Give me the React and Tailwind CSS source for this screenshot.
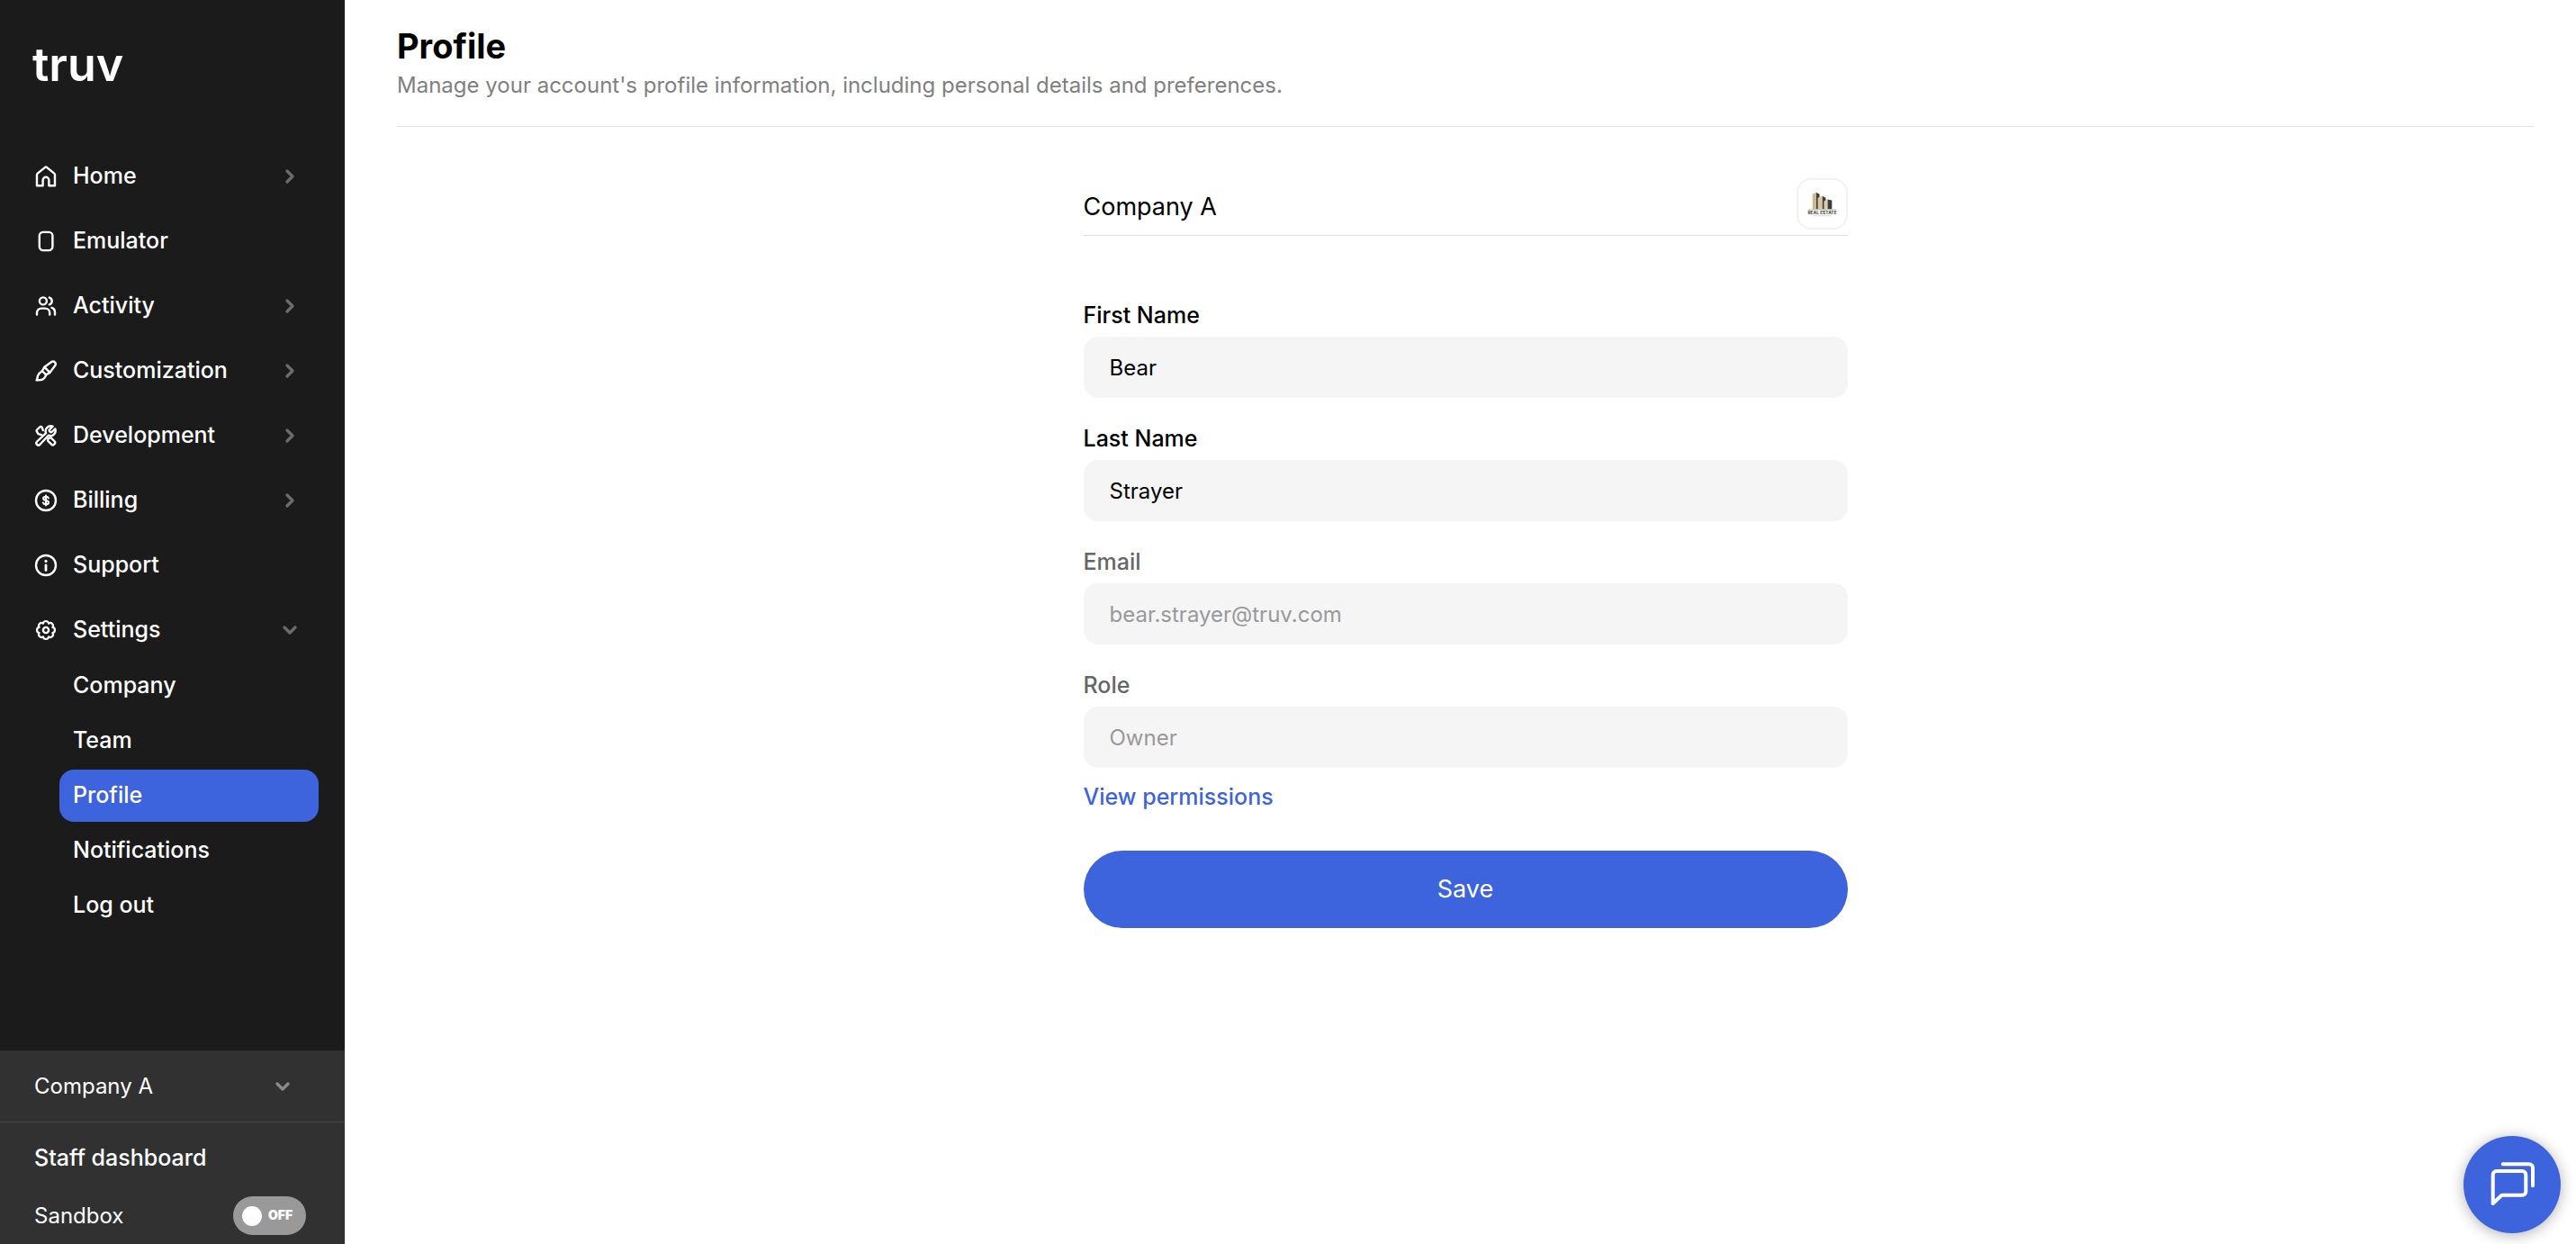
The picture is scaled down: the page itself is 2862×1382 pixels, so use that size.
import React, { useState } from "react";

const Icon = ({ children }) => (
  <svg
    viewBox="0 0 26 26"
    className="w-[26px] h-[26px] shrink-0"
    fill="none"
    stroke="currentColor"
    strokeWidth="2.4"
    strokeLinecap="round"
    strokeLinejoin="round"
    aria-hidden="true"
  >
    {children}
  </svg>
);

const HomeIcon = () => (
  <Icon>
    <path d="M3 23.2V11.3c0-.7.3-1.3.8-1.7l8-6.5c.7-.6 1.7-.6 2.4 0l8 6.5c.5.4.8 1 .8 1.7v11.9h-6.6v-6a3.4 3.4 0 0 0-6.8 0v6Z" />
  </Icon>
);

const DeviceIcon = () => (
  <Icon>
    <rect x="5.8" y="2.9" width="14.6" height="20.2" rx="4" />
  </Icon>
);

const UsersIcon = () => (
  <Icon>
    <circle cx="9.9" cy="7.4" r="4" />
    <path d="M3 22.6v-2.2a4.8 4.8 0 0 1 4.8-4.8h4.6a4.8 4.8 0 0 1 4.8 4.8v2.2" />
    <path d="M16.8 3.6a4 4 0 0 1 0 7.7M19.4 14.8a4.8 4.8 0 0 1 3.6 4.6v3.2" />
  </Icon>
);

const BrushIcon = () => (
  <Icon>
    <path d="m8.800 13.200 2.600-4.400 7.900-5.800a2.900 2.900 0 0 1 4 4l-5.900 7.900-4.200 2.500" />
    <path d="M2.600 23.400c1.200-1.400.7-3.300 1.500-5.300.8-1.900 2.500-3.600 4.700-4.900l4.400 4.200c-.7 2.300-1.800 3.900-3.600 5-2.100 1.200-4.500 1-7 1Z" />
    <path d="m11.400 8.800 6 6.100" />
  </Icon>
);

const ToolsIcon = () => (
  <Icon>
    <path d="m20.600 2.700-3.200 3.100a1.800 1.800 0 0 0 2.600 2.700l3.300-3.100a5.700 5.700 0 0 1-7.500 7.300L6.400 22.800a2.300 2.300 0 0 1-3.300-3.300l10-9.400a5.700 5.700 0 0 1 7.500-7.400Z" />
    <path d="m9.800 7-1.200-3.300a1.400 1.400 0 0 0-2.300-.4l-3.300 3.200a1.400 1.400 0 0 0-.2 1.700l1.700 2.900 3.600 1" />
    <path d="m16.300 15.600 2.200-.4 4.300 4.300c.7.7.7 1.700 0 2.400l-1 1c-.7.7-1.700.7-2.400 0l-4.300-4.300.3-2.200" />
  </Icon>
);

const DollarIcon = () => (
  <Icon>
    <circle cx="13" cy="13" r="11" />
    <path d="M15.9 10.3c-.4-1.100-1.500-1.600-2.900-1.600-1.700 0-2.900.8-2.900 2.100 0 3.100 5.900 1.400 5.900 4.400 0 1.300-1.200 2.100-3 2.100-1.500 0-2.700-.6-3.100-1.800M13 7.500v11" strokeWidth="2.1" />
  </Icon>
);

const InfoIcon = () => (
  <Icon>
    <circle cx="13" cy="13" r="11" />
    <path d="M13 12.8v5.700" strokeWidth="2.8" />
    <path d="M13 8.4v.01" strokeWidth="3.2" />
  </Icon>
);

const GearIcon = () => (
  <Icon>
    <circle cx="13" cy="13" r="3.1" />
    <path
      d="M9.940 5.610a3.100 3.100 0 0 1 6.120 0 3.100 3.100 0 0 1 4.330 4.330 3.100 3.100 0 0 1 0 6.120 3.100 3.100 0 0 1-4.330 4.330 3.100 3.100 0 0 1-6.120 0 3.100 3.100 0 0 1-4.330-4.330 3.100 3.100 0 0 1 0-6.120 3.100 3.100 0 0 1 4.330-4.330Z"
      strokeWidth="2.2"
    />
  </Icon>
);

const Chevron = ({ down = false, className = "" }) => (
  <svg
    viewBox="0 0 20 20"
    className={`w-5 h-5 shrink-0 ${className}`}
    fill="none"
    stroke="currentColor"
    strokeWidth="3.4"
    strokeLinecap="round"
    strokeLinejoin="round"
    aria-hidden="true"
  >
    <path d={down ? "M4 7l6 6 6-6" : "M7 4l6 6-6 6"} />
  </svg>
);

const CompanyLogo = () => (
  <svg viewBox="0 0 54 54" className="w-full h-full" role="img" aria-label="Company A logo">
    <path d="M20 14l4 2v17h-4Z" fill="#3f3c37" />
    <path d="M16 16l4-2v19h-4Z" fill="#cdb98f" />
    <path d="M27 18l4 2v13h-4Z" fill="#3c3c3c" />
    <path d="M22 20l5-2v15h-5Z" fill="#d8c7a3" />
    <path d="M33 22l5 1v10h-5Z" fill="#3c3c3c" />
    <path d="M29 24l4-2v11h-4Z" fill="#dccbaa" />
    <path d="M11 33.5h32" stroke="#b9b9b9" strokeWidth="1" />
    <text x="27" y="39" textAnchor="middle" fontSize="5" fontWeight="700" fill="#3c3c3c">
      REAL ESTATE
    </text>
    <path d="M17 40.5h20" stroke="#e3d5b8" strokeWidth="1" />
  </svg>
);

const navItems = [
  { label: "Home", icon: HomeIcon, expandable: true },
  { label: "Emulator", icon: DeviceIcon },
  { label: "Activity", icon: UsersIcon, expandable: true },
  { label: "Customization", icon: BrushIcon, expandable: true },
  { label: "Development", icon: ToolsIcon, expandable: true },
  { label: "Billing", icon: DollarIcon, expandable: true },
  { label: "Support", icon: InfoIcon },
  { label: "Settings", icon: GearIcon, expandable: true, open: true },
];

const settingsItems = ["Company", "Team", "Profile", "Notifications", "Log out"];

const Sidebar = () => {
  const [sandbox, setSandbox] = useState(false);

  return (
    <aside className="w-[383px] shrink-0 flex flex-col bg-[#1b1b1b] text-white text-[25px] font-medium">
      <a href="#" className="block mt-10 ml-9 text-[52px] leading-[64px] font-semibold">
        truv
      </a>

      <nav className="mt-14">
        {navItems.map(({ label, icon: NavIcon, expandable, open }) => (
          <a key={label} href="#" className="flex items-center h-[72px] pl-[38px] pr-[51px]">
            <NavIcon />
            <span className="ml-[17px] flex-1">{label}</span>
            {expandable && <Chevron down={open} className="text-[#6b6b6b]" />}
          </a>
        ))}

        <div className="flex flex-col gap-[3px] pl-[66px] pr-[29px] -mt-[3px]">
          {settingsItems.map((label) => (
            <a
              key={label}
              href="#"
              className={`flex items-center h-[58px] pl-[15px] rounded-2xl ${
                label === "Profile" ? "bg-[#3d63dd]" : ""
              }`}
            >
              {label}
            </a>
          ))}
        </div>
      </nav>

      {/* Company switcher and environment */}
      <div className="mt-auto bg-[#313131]">
        <button className="flex items-center justify-between w-full h-20 pl-[38px] pr-[59px] border-b border-[#484848] text-2xl font-normal">
          Company A
          <Chevron down className="text-[#8a8a8a]" />
        </button>
        <a href="#" className="flex items-center h-20 pl-[38px]">
          Staff dashboard
        </a>
        <div className="flex items-center justify-between h-[55px] pb-2 pl-[38px] pr-[43px] text-2xl font-normal">
          <span>Sandbox</span>
          <button
            role="switch"
            aria-checked={sandbox}
            aria-label="Sandbox"
            onClick={() => setSandbox(!sandbox)}
            className="flex items-center gap-[7px] w-[81px] h-[43px] pl-[10px] rounded-full bg-[#999999]"
          >
            <span className="w-[22px] h-[22px] rounded-full bg-white"></span>
            <span className="text-[14px] font-black">{sandbox ? "ON" : "OFF"}</span>
          </button>
        </div>
      </div>
    </aside>
  );
};

const Field = ({ id, label, value, onChange, disabled }) => (
  <div>
    <label
      htmlFor={id}
      className={`block text-[25px] leading-8 font-medium mb-2 ${disabled ? "text-[#666666]" : "text-black"}`}
    >
      {label}
    </label>
    <input
      id={id}
      type="text"
      value={value}
      onChange={onChange}
      disabled={disabled}
      className="block w-full h-[68px] px-[29px] rounded-2xl bg-[#f5f5f5] text-2xl text-black disabled:text-[#999999] focus:outline-none"
    />
  </div>
);

const ProfileForm = () => {
  const [form, setForm] = useState({ firstName: "Bear", lastName: "Strayer" });

  return (
    <form onSubmit={(e) => e.preventDefault()} className="w-full max-w-[849px] mx-auto mt-[57px]">
      <div className="flex items-end justify-between h-16 pb-[6px] border-b border-[#dedede]">
        <h2 className="text-[27px] leading-[50px]">Company A</h2>
        <div className="w-[57px] h-[57px] rounded-2xl border-2 border-[#f2f2f2]">
          <CompanyLogo />
        </div>
      </div>

      <div className="flex flex-col gap-[29px] mt-[72px]">
        <Field
          id="firstName"
          label="First Name"
          value={form.firstName}
          onChange={(e) => setForm({ ...form, firstName: e.target.value })}
        />
        <Field
          id="lastName"
          label="Last Name"
          value={form.lastName}
          onChange={(e) => setForm({ ...form, lastName: e.target.value })}
        />
        <Field id="email" label="Email" value="bear.strayer@truv.com" disabled />
        <Field id="role" label="Role" value="Owner" disabled />
      </div>

      <a href="#" className="block w-fit mt-4 text-[25px] leading-8 font-medium text-[#3d63dd]">
        View permissions
      </a>

      <button type="submit" className="block w-full h-[86px] mt-11 rounded-full bg-[#3d63dd] text-white text-[27px]">
        Save
      </button>
    </form>
  );
};

const App = () => {
  return (
    <div className="flex min-h-screen bg-white text-black font-['Inter',sans-serif]">
      <Sidebar />

      <main className="flex-1 pl-[58px] pr-[47px]">
        <header className="pt-[27px] pb-[29px] border-b border-[#e0e0e0]">
          <h1 className="text-[38px] leading-[48px] font-bold">Profile</h1>
          <p className="mt-1 text-2xl leading-8 text-[#808080]">
            Manage your account's profile information, including personal details and preferences.
          </p>
        </header>
        <ProfileForm />
      </main>

      {/* Chat launcher */}
      <button
        aria-label="Open chat"
        className="fixed right-[17px] bottom-3 flex items-center justify-center w-[108px] h-[108px] rounded-full bg-[#3d63dd] text-white shadow-[0_2px_16px_rgba(0,0,0,0.3)]"
      >
        <svg
          viewBox="0 0 50 50"
          className="w-[50px] h-[50px]"
          fill="none"
          stroke="currentColor"
          strokeWidth="4"
          strokeLinecap="round"
          strokeLinejoin="round"
          aria-hidden="true"
        >
          <path d="M3.7 46V14a4 4 0 0 1 4-4H36.3a4 4 0 0 1 4 4v18.700a4 4 0 0 1-4 4H13.5Z" />
          <path d="M14.7 2.200h29.300a4 4 0 0 1 4 4v20" />
        </svg>
      </button>
    </div>
  );
};

export default App;
